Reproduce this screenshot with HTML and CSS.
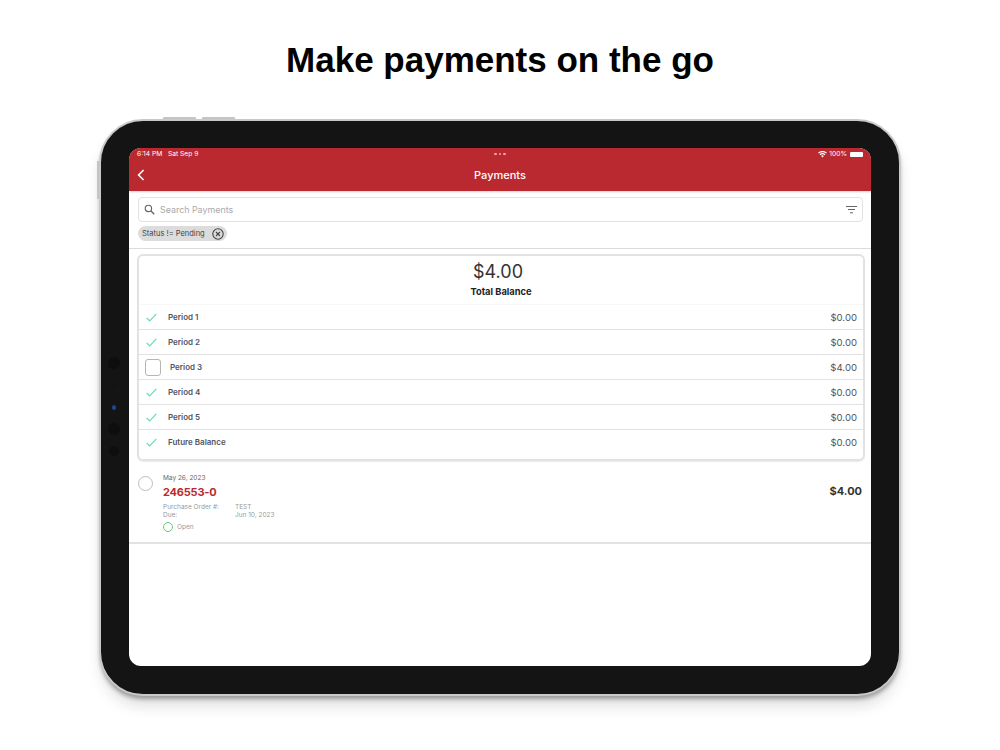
FILE: index.html
```html
<!DOCTYPE html>
<html lang="en">
<head>
<meta charset="utf-8">
<title>Make payments on the go</title>
<link rel="stylesheet" href="styles.css">
</head>
<body>
<h1 class="headline">Make payments on the go</h1>
<div class="device">
  <span class="hw hw-top hw-top-a"></span>
  <span class="hw hw-top hw-top-b"></span>
  <span class="hw hw-side"></span>
  <span class="sensor sensor-a"></span>
  <span class="sensor sensor-b"></span>
  <span class="sensor sensor-c"></span>
  <span class="sensor sensor-d"></span>
  <span class="sensor sensor-e"></span>
  <div class="screen">
    <header class="appbar">
      <div class="status">
        <span>6:14 PM&nbsp;&nbsp; Sat Sep 9</span>
        <span class="dots"><i></i><i></i><i></i></span>
        <span class="status-right">
          <svg class="wifi" viewBox="0 0 16 12" width="9" height="7"><path d="M8 11.5 5.6 8.7a3.4 3.4 0 0 1 4.8 0zM4.3 7.3 2.9 5.7a7.4 7.4 0 0 1 10.2 0l-1.4 1.6a5.3 5.3 0 0 0-7.4 0zM1.7 4.4.2 2.8a11.3 11.3 0 0 1 15.6 0l-1.5 1.6a9.2 9.2 0 0 0-12.6 0z" fill="#fff"/></svg>
          100%
          <span class="battery"></span>
        </span>
      </div>
      <div class="navrow">
        <svg class="back" viewBox="0 0 8 12" width="8" height="12"><path d="M6.6 1 1.6 6l5 5" fill="none" stroke="#fff" stroke-width="1.6"/></svg>
        <span class="navtitle">Payments</span>
      </div>
    </header>
    <section class="filters">
      <div class="search">
        <svg viewBox="0 0 12 12" width="11" height="11"><circle cx="4.8" cy="4.8" r="3.5" fill="none" stroke="#666" stroke-width="1.2"/><path d="m7.4 7.4 3.8 3.8" stroke="#666" stroke-width="1.4"/></svg>
        <span class="placeholder">Search Payments</span>
        <svg class="filter-icon" viewBox="0 0 11 8" width="11" height="8"><path d="M0 .5h11M2 3.5h7M4 6.8h3" stroke="#666" stroke-width="1"/></svg>
      </div>
      <div class="chip">
        <span>Status != Pending</span>
        <svg viewBox="0 0 12 12" width="12" height="12"><circle cx="6" cy="6" r="5.2" fill="none" stroke="#444" stroke-width="1.1"/><path d="m4 4 4 4m0-4-4 4" stroke="#444" stroke-width="1.1"/></svg>
      </div>
    </section>
    <section class="card">
      <div class="balance">
        <div class="amount">$4.00</div>
        <div class="amount-label">Total Balance</div>
      </div>
      <div class="row"><svg class="check" viewBox="0 0 11 9" width="11" height="9"><path d="m.7 5 3 3L10.3.8" fill="none" stroke="#66dfb0" stroke-width="1.2"/></svg><span class="row-label">Period 1</span><span class="row-value">$0.00</span></div>
      <div class="row"><svg class="check" viewBox="0 0 11 9" width="11" height="9"><path d="m.7 5 3 3L10.3.8" fill="none" stroke="#66dfb0" stroke-width="1.2"/></svg><span class="row-label">Period 2</span><span class="row-value">$0.00</span></div>
      <div class="row row-open"><span class="box"></span><span class="row-label">Period 3</span><span class="row-value">$4.00</span></div>
      <div class="row"><svg class="check" viewBox="0 0 11 9" width="11" height="9"><path d="m.7 5 3 3L10.3.8" fill="none" stroke="#66dfb0" stroke-width="1.2"/></svg><span class="row-label">Period 4</span><span class="row-value">$0.00</span></div>
      <div class="row"><svg class="check" viewBox="0 0 11 9" width="11" height="9"><path d="m.7 5 3 3L10.3.8" fill="none" stroke="#66dfb0" stroke-width="1.2"/></svg><span class="row-label">Period 5</span><span class="row-value">$0.00</span></div>
      <div class="row"><svg class="check" viewBox="0 0 11 9" width="11" height="9"><path d="m.7 5 3 3L10.3.8" fill="none" stroke="#66dfb0" stroke-width="1.2"/></svg><span class="row-label">Future Balance</span><span class="row-value">$0.00</span></div>
    </section>
    <section class="invoice">
      <span class="radio"></span>
      <div class="invoice-body">
        <div class="invoice-date">May 26, 2023</div>
        <div class="invoice-number">246553-0</div>
        <dl class="meta">
          <dt>Purchase Order #:</dt><dd>TEST</dd>
          <dt>Due:</dt><dd>Jun 10, 2023</dd>
        </dl>
        <div class="state"><span class="state-ring"></span><span class="state-label">Open</span></div>
      </div>
      <div class="invoice-total">$4.00</div>
    </section>
  </div>
</div>
</body>
</html>
```
FILE: styles.css
```css
* { box-sizing: border-box; }
html, body { margin: 0; height: 100%; }
body {
  width: 1000px;
  height: 750px;
  overflow: hidden;
  background: #fff;
  font-family: Inter, "Liberation Sans", sans-serif;
  color: #333;
}
.headline {
  margin: 0;
  padding-top: 39px;
  height: 119px;
  text-align: center;
  font: 700 35px/42px "Liberation Sans", Arial, sans-serif;
  color: #000;
}
.device {
  position: relative;
  width: 802px;
  height: 577px;
  margin-left: 99px;
  padding: 27px 28px 28px 28px;
  background: #141414;
  border: 2px solid #c9c9cc;
  border-radius: 44px;
  box-shadow: 0 4px 4px -1px rgba(0,0,0,.32), 0 12px 16px -3px rgba(0,0,0,.14);
}
.hw { position: absolute; background: #c4c4c7; }
.hw-top { top: -4px; width: 33px; height: 2px; border-radius: 1px 1px 0 0; }
.hw-top-a { left: 62px; }
.hw-top-b { left: 101px; }
.hw-side { left: -4px; top: 40px; width: 2px; height: 38px; }
.sensor { position: absolute; border-radius: 50%; background: #0e0e0e; }
.sensor-a { left: 7px; top: 236px; width: 12px; height: 12px; }
.sensor-b { left: 12px; top: 264px; width: 2px; height: 2px; }
.sensor-c { left: 11px; top: 284px; width: 4px; height: 5px; background: #1b4a94; }
.sensor-d { left: 7px; top: 302px; width: 12px; height: 12px; }
.sensor-e { left: 8px; top: 325px; width: 10px; height: 10px; }
.screen {
  width: 742px;
  height: 518px;
  background: #fff;
  border-radius: 12px;
  overflow: hidden;
}
.appbar {
  height: 43px;
  background: #bb2930;
  color: #fff;
  box-shadow: 0 1px 2px rgba(0,0,0,.18);
  position: relative;
}
.status {
  height: 12px;
  padding: 0 8px 0 8px;
  display: grid;
  grid-template-columns: 1fr auto 1fr;
  align-items: center;
  font-size: 6.7px;
  line-height: 12px;
}
.dots { display: flex; gap: 2px; }
.dots i { width: 2.5px; height: 2.5px; border-radius: 50%; background: #e8a9ac; }
.status-right { display: flex; justify-content: flex-end; align-items: center; gap: 2px; }
.battery {
  width: 13px;
  height: 5px;
  margin-left: 1px;
  background: #fff;
  border-radius: 1px;
}
.navrow { height: 31px; position: relative; display: flex; align-items: center; justify-content: center; padding-bottom: 2px; }
.back { position: absolute; left: 8px; top: 9px; }
.navtitle { font-size: 11px; font-weight: 500; }
.filters {
  height: 58px;
  padding: 6px 8px 0 9px;
  border-bottom: 1px solid #dcdcdc;
}
.search {
  height: 25px;
  border: 1px solid #e2e2e2;
  border-radius: 4px;
  display: flex;
  align-items: center;
  padding: 0 5px;
  gap: 5px;
}
.placeholder { flex: 1; font-size: 8.9px; color: #a9a9ab; }
.filter-icon { margin-top: 1px; }
.chip {
  width: 89px;
  height: 15px;
  margin-top: 4px;
  padding: 0 3px 0 4px;
  background: #dcdcdc;
  border-radius: 8px;
  display: flex;
  align-items: center;
  justify-content: space-between;
  font-size: 7.5px;
  color: #444;
}
.card {
  width: 728px;
  height: 207px;
  margin: 5px 0 0 8px;
  border: 2px solid #e2e2e2;
  border-radius: 6px;
  box-shadow: 0 1px 1px rgba(0,0,0,.08);
}
.balance { height: 48px; text-align: center; padding-top: 4px; }
.amount { font-size: 18px; line-height: 24px; color: #333; margin-left: -6px; }
.amount-label { font-size: 9.3px; line-height: 14px; font-weight: 700; color: #222; padding-top: 1px; }
.row {
  height: 25px;
  display: flex;
  align-items: center;
  padding: 0 6px;
  border-top: 1px solid #e2e2e2;
}
.balance + .row { border-top-color: #f7f7f7; }
.check { flex: none; margin: 0 11px 0 1px; }
.box {
  flex: none;
  width: 16px;
  height: 17px;
  margin-right: 9px;
  border: 1px solid #b5b5b5;
  border-radius: 3px;
}
.row-label { flex: 1; font-size: 8px; font-weight: 600; color: #54545f; }
.row-value { font-size: 9.6px; color: #555; }
.invoice {
  height: 83px;
  padding: 12px 9px 0 9px;
  display: flex;
  border-bottom: 2px solid #e2e2e2;
}
.radio {
  flex: none;
  width: 15px;
  height: 15px;
  margin-top: 3px;
  border: 1px solid #bdbdbd;
  border-radius: 50%;
}
.invoice-body { flex: 1; margin-left: 10px; }
.invoice-date { font-size: 6.5px; line-height: 10px; color: #666; }
.invoice-number { font-size: 11px; line-height: 16px; font-weight: 700; color: #bb2930; margin-top: 1px; letter-spacing: -.2px; }
.meta {
  margin: 3px 0 0;
  display: grid;
  grid-template-columns: 72px auto;
  font-size: 6.5px;
  line-height: 8px;
  color: #999;
  justify-content: start;
}
.meta dd { margin: 0; }
.state { display: flex; align-items: center; gap: 4px; margin-top: 1px; font-size: 6.5px; color: #999; line-height: 11px; }
.state-ring { width: 10px; height: 10px; border: 1.5px solid #6cc47a; border-radius: 50%; }
.state-label { padding-top: 2px; }
.invoice-total { font-size: 11px; font-weight: 700; color: #333; margin-top: 11px; }
```
